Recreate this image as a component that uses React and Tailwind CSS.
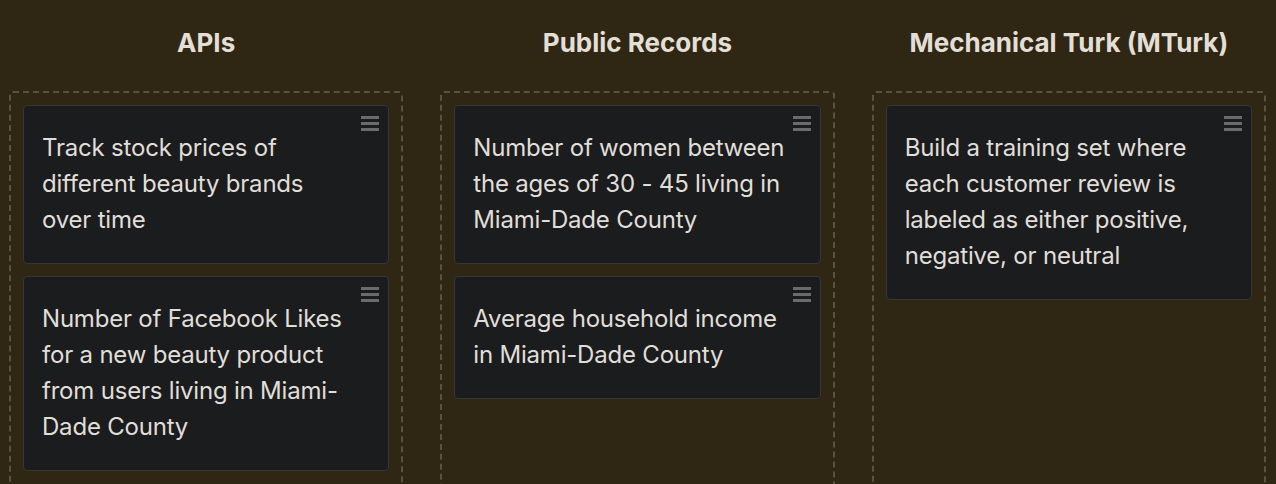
import React from "react";

const columns = [
  {
    title: "APIs",
    cards: [
      ["Track stock prices of", "different beauty brands", "over time"],
      ["Number of Facebook Likes", "for a new beauty product", "from users living in Miami-", "Dade County"],
    ],
  },
  {
    title: "Public Records",
    cards: [
      ["Number of women between", "the ages of 30 - 45 living in", "Miami-Dade County"],
      ["Average household income", "in Miami-Dade County"],
    ],
  },
  {
    title: "Mechanical Turk (MTurk)",
    cards: [
      ["Build a training set where", "each customer review is", "labeled as either positive,", "negative, or neutral"],
    ],
  },
];

function Handle() {
  return (
    <div className="absolute right-[9px] top-[10px] flex w-[18px] flex-col gap-[3px]">
      <div className="h-[3px] bg-[#6b6b6b]" />
      <div className="h-[3px] bg-[#6b6b6b]" />
      <div className="h-[3px] bg-[#6b6b6b]" />
    </div>
  );
}

export default function App() {
  return (
    <div
      className="h-[484px] overflow-hidden bg-[#2f2714] pl-[9px] pr-[10px]"
      style={{ fontFamily: "Inter, 'Open Sans', sans-serif" }}
    >
      <div className="grid grid-cols-3 gap-x-[37px]">
        {columns.map((col) => (
          <div key={col.title} className="flex flex-col">
            <h2 className="pt-[27px] pb-[32px] text-center text-[26px] leading-[32px] font-bold tracking-[0px] text-[#e3dfd6]">
              {col.title}
            </h2>
            <div className="flex min-h-[420px] flex-col gap-[12px] rounded-[4px] border-2 border-dashed border-[#5c513a] px-[12px] pt-[12px]">
              {col.cards.map((lines, i) => (
                <div
                  key={i}
                  className="relative rounded-[4px] border border-[#34363a] bg-[#1b1c1e] pt-[24px] pb-[25px] pl-[18px] pr-[20px] text-[24px] leading-[36px] tracking-[-0.2px] text-[#e0ded9]"
                >
                  <Handle />
                  {lines.map((l, j) => (
                    <span key={j} className="block whitespace-nowrap">
                      {l}
                    </span>
                  ))}
                </div>
              ))}
            </div>
          </div>
        ))}
      </div>
    </div>
  );
}
